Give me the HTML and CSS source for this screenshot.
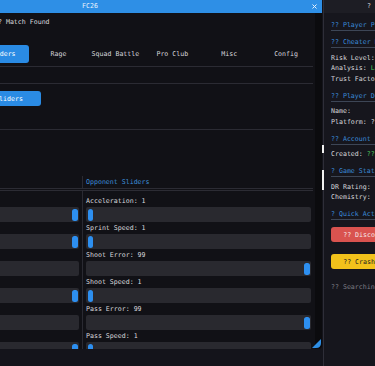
FILE: index.html
```html
<!DOCTYPE html>
<html lang="en">

<head>
    <meta charset="UTF-8">
    <meta name="viewport" content="width=device-width, initial-scale=1.0">
    <title>FC26</title>
    <link rel="stylesheet" href="styles.css">
</head>

<body>
    <!-- main window -->
    <section class="win main">
        <header class="title">
            <span class="name">FC26</span>
            <svg class="close" viewBox="0 0 5 5"><path d="M0.5 0.5L4.5 4.5M4.5 0.5L0.5 4.5" /></svg>
        </header>
        <div class="body">
            <p class="status">?? Match Found</p>
            <nav class="tabs">
                <button class="tab">Home</button>
                <button class="tab">Aimbot</button>
                <button class="tab on">Sliders</button>
                <button class="tab">Rage</button>
                <button class="tab">Squad Battle</button>
                <button class="tab">Pro Club</button>
                <button class="tab">Misc</button>
                <button class="tab">Config</button>
            </nav>
            <div class="sep"></div>
            <div class="band"></div>
            <div class="sep"></div>
            <div class="subtabs">
                <button class="sub">Sliders</button>
            </div>
            <div class="sep sep-low"></div>

            <div class="table">
                <div class="thead">
                    <div class="cell">Your Sliders</div>
                    <div class="cell right">Opponent Sliders</div>
                </div>
                <div class="rule"></div>
                <div class="tbody">
                    <div class="cell">
                        <div class="lbl">Acceleration: 99</div>
                        <div class="frame hi"><span class="grab"></span></div>
                        <div class="lbl">Sprint Speed: 99</div>
                        <div class="frame hi"><span class="grab"></span></div>
                        <div class="lbl">Shoot Error: 1</div>
                        <div class="frame"><span class="grab"></span></div>
                        <div class="lbl">Shoot Speed: 99</div>
                        <div class="frame hi"><span class="grab"></span></div>
                        <div class="lbl">Pass Error: 1</div>
                        <div class="frame"><span class="grab"></span></div>
                        <div class="lbl">Pass Speed: 99</div>
                        <div class="frame hi"><span class="grab"></span></div>
                    </div>
                    <div class="cell right">
                        <div class="lbl">Acceleration: 1</div>
                        <div class="frame"><span class="grab"></span></div>
                        <div class="lbl">Sprint Speed: 1</div>
                        <div class="frame"><span class="grab"></span></div>
                        <div class="lbl">Shoot Error: 99</div>
                        <div class="frame hi"><span class="grab"></span></div>
                        <div class="lbl">Shoot Speed: 1</div>
                        <div class="frame"><span class="grab"></span></div>
                        <div class="lbl">Pass Error: 99</div>
                        <div class="frame hi"><span class="grab"></span></div>
                        <div class="lbl">Pass Speed: 1</div>
                        <div class="frame"><span class="grab"></span></div>
                    </div>
                </div>
            </div>
        </div>
        <div class="scroll"></div>
        <svg class="grip" viewBox="0 0 9 9"><path d="M9 0L9 4Q9 9 4 9L0 9Z" /></svg>
    </section>

    <!-- side window -->
    <aside class="win side">
        <header class="title">?</header>
        <div class="body">
            <div class="sec">
                <h2>?? Player Profile</h2>
            </div>
            <div class="sec">
                <h2>?? Cheater Detection</h2>
                <p>Risk Level: Low</p>
                <p>Analysis: <span class="ok">Legit</span></p>
                <p>Trust Factor: 100%</p>
            </div>
            <div class="sec">
                <h2>?? Player Details</h2>
                <p>Name:</p>
                <p>Platform: ??</p>
            </div>
            <div class="sec">
                <h2>?? Account Info</h2>
                <p>Created: <span class="ok">??</span></p>
            </div>
            <div class="sec">
                <h2>? Game Stats</h2>
                <p>DR Rating: --</p>
                <p>Chemistry: --</p>
            </div>
            <div class="sec">
                <h2>? Quick Actions</h2>
                <button class="act red">?? Disconnect</button>
                <button class="act yellow">?? Crash Game</button>
                <p class="wait">?? Searching...</p>
            </div>
        </div>
    </aside>

    <span class="mark m1"></span>
    <span class="mark m2"></span>
</body>

</html>
```

FILE: styles.css
```css
/* reset */
* {
    box-sizing: border-box
}

html,
body {
    width: 100%;
    height: 100%
}

body,
p,
h2,
button {
    margin: 0;
    padding: 0
}

body {
    position: relative;
    overflow: hidden;
    background-color: #14141b;
    color: #d8d8dc;
    font-family: 'DejaVu Sans Mono', 'Liberation Mono', monospace;
    font-size: 6.6px
}

button {
    border: 0;
    font: inherit;
    cursor: pointer
}

/* windows */
.win {
    position: absolute;
    top: 0;
    overflow: hidden
}

.title {
    height: 13px;
    line-height: 13px;
    white-space: nowrap
}

.main {
    left: -147px;
    width: 469px;
    height: 349px;
    background-color: #111116;
    border-radius: 0 0 4px 0
}

.main .title {
    display: grid;
    grid-template-columns: 1fr auto 1fr;
    align-items: center;
    padding: 0 5px 0 10px;
    background-color: #2e8fe6;
    color: #eaf3fc
}

.main .title .name {
    grid-column: 2
}

.main .title .close {
    justify-self: end;
    width: 5px;
    height: 5px;
    stroke: #e6f1fc;
    stroke-width: 1
}

.main .body {
    padding: 4px 9px 0 8px
}

.status {
    margin-left: 133px;
    line-height: 10px;
    white-space: nowrap
}

.tabs {
    display: flex;
    gap: 3px;
    height: 18px;
    margin-top: 18px
}

.tab {
    flex: 1;
    border-radius: 3px;
    background: transparent;
    color: #d6d6dc;
    white-space: nowrap
}

.tab.on {
    background-color: #2a8be4;
    color: #fff
}

.sep {
    height: 1px;
    margin-top: 3px;
    background-color: #2b2b33
}

.band {
    height: 16px
}

.band + .sep {
    margin-top: 0
}

.subtabs {
    height: 15px;
    margin-top: 7px;
    padding-left: 116px
}

.sub {
    width: 64px;
    height: 15px;
    border-radius: 3px;
    background-color: #2a8be4;
    color: #fff
}

.sep-low {
    margin-top: 23px
}

/* sliders table */
.table {
    margin-top: 46px
}

.thead,
.tbody {
    display: grid;
    grid-template-columns: 221px 231px
}

.thead {
    height: 13px;
    border-bottom: 1px solid #2c2c34;
    line-height: 12px;
    color: #3d8ed8
}

.rule {
    height: 1px;
    margin-top: 1px;
    background-color: #2c2c34
}

.cell {
    padding-right: 3px;
    white-space: nowrap
}

.cell.right {
    padding: 0 2px 0 3px;
    border-left: 1px solid #2a2a32
}

.tbody .cell {
    padding-top: 5px;
    height: 200px
}

.lbl {
    height: 11px;
    line-height: 11px
}

.frame {
    display: flex;
    align-items: center;
    height: 15px;
    margin-bottom: 1px;
    padding: 0 1.5px;
    border-radius: 2px;
    background-color: #29292f
}

.frame.hi {
    justify-content: flex-end
}

.grab {
    width: 5.5px;
    height: 12px;
    border-radius: 2.5px;
    background-color: #2d8ff0
}

.scroll {
    position: absolute;
    top: 13px;
    right: 0;
    bottom: 0;
    width: 7px;
    background-color: #0b0b0e
}

.grip {
    position: absolute;
    right: 1px;
    bottom: 1px;
    width: 9px;
    height: 9px;
    fill: #2e8fe6
}

/* side window */
.side {
    left: 323px;
    width: 91px;
    height: 366px;
    border-left: 1px solid #2e2e38;
    background-color: #16161d
}

.side .title {
    background-color: #1d1d24;
    color: #d4d4d8;
    text-align: center
}

.side .body {
    padding: 6.5px 0 0 7px
}

.sec + .sec {
    margin-top: 6.75px
}

.sec h2 {
    height: 11px;
    border-bottom: 1px solid #3d4656;
    color: #3a8ad8;
    font-size: inherit;
    font-weight: normal;
    line-height: 10px;
    white-space: nowrap
}

.sec p {
    line-height: 10.5px;
    white-space: nowrap
}

.sec h2 + p {
    margin-top: 4.25px
}

.ok {
    color: #4cc35a
}

.act {
    display: block;
    width: 76px;
    height: 15px;
    border-radius: 3px;
    white-space: nowrap
}

.red {
    margin-top: 7px;
    background-color: #d9534f;
    color: #f6e6e6
}

.yellow {
    margin-top: 12px;
    background-color: #f2c21b;
    color: #222
}

.sec p.wait {
    margin-top: 13px;
    line-height: 10px;
    color: #7c7c84
}

.mark {
    position: absolute;
    left: 322px;
    width: 2px;
    background-color: #f0f0f0
}

.m1 {
    top: 145px;
    height: 8px
}

.m2 {
    top: 170px;
    height: 20px
}
```
